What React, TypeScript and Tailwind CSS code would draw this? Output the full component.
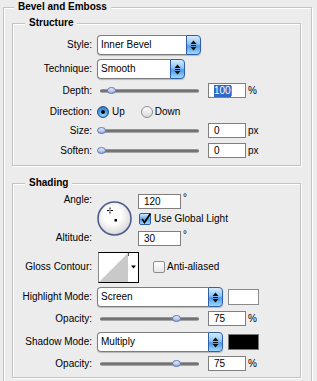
import React from "react";

type Kids = { children?: React.ReactNode };

function Group({ title, titleLeft, className = "", children }: Kids & { title: string; titleLeft: string; className?: string }) {
  return (
    <div className={`relative border border-[#c3c3c3] shadow-[inset_1px_1px_0_#fff,1px_1px_0_#fff] ${className}`}>
      <span className={`absolute -top-[8px] h-[14px] bg-[#ececec] px-[4px] text-[10px] font-bold leading-[14px] ${titleLeft}`}>{title}</span>
      {children}
    </div>
  );
}

function Row({ label, className = "", children }: Kids & { label: string; className?: string }) {
  return (
    <div className={`flex items-center ${className}`}>
      <div className="w-[79px] shrink-0 text-right">{label}</div>
      <div className="ml-[5px] flex items-center">{children}</div>
    </div>
  );
}

function Arrows() {
  return (
    <svg width="7" height="11" viewBox="0 0 7 11">
      <path d="M3.5 0.5L6.5 4H0.5z" fill="#111" />
      <rect x="1" y="5" width="5" height="1" fill="#111" />
      <path d="M0.5 7H6.5L3.5 10.5z" fill="#111" />
    </svg>
  );
}

function Select({ value, width }: { value: string; width: string }) {
  return (
    <div className={`flex h-[20px] rounded-[4px] shadow-[0_1px_1px_rgba(0,0,0,0.22)] ${width}`}>
      <div className="flex flex-1 items-center rounded-l-[4px] border border-r-0 border-[#7d7d7d] bg-white pl-[3px]">{value}</div>
      <div className="flex w-[15px] items-center justify-center rounded-r-[4px] border border-[#2f5fa8] bg-[linear-gradient(#d6ebfd,#8cc4f3_45%,#4d98e4_55%,#a0d9fd)]">
        <Arrows />
      </div>
    </div>
  );
}

function Field({ children, w = "w-[38px]" }: Kids & { w?: string }) {
  return <div className={`flex h-[15px] items-center border border-[#7f7f7f] bg-white pl-[5px] ${w}`}>{children}</div>;
}

function Slider({ value, min, max }: { value: number; min: number; max: number }) {
  const left = ((value - min) / (max - min)) * 100;
  return (
    <div className="relative h-[15px] w-[106px]">
      <div className="absolute left-[3px] right-[4px] top-[6px] h-[4px] rounded-full bg-[linear-gradient(#a9a9a9,#5e5e5e_50%,#bdbdbd)]" />
      <svg className="absolute top-[4px]" style={{ left }} width="9" height="7" viewBox="0 0 9 7">
        <defs>
          <linearGradient id="th" x1="0" y1="0" x2="0" y2="1">
            <stop offset="0" stopColor="#eef4ff" />
            <stop offset="1" stopColor="#8eaade" />
          </linearGradient>
        </defs>
        <ellipse cx="4.5" cy="3.5" rx="4" ry="3" fill="url(#th)" stroke="#5f76aa" strokeWidth="1" />
      </svg>
    </div>
  );
}

function Radio({ checked }: { checked?: boolean }) {
  return checked ? (
    <span className="flex h-[12px] w-[12px] shrink-0 items-center justify-center rounded-full border border-[#27508f] bg-[radial-gradient(circle_at_50%_70%,#a6e4ff,#3f8fe0_60%,#2062b8)]">
      <span className="h-[4px] w-[4px] rounded-full bg-black" />
    </span>
  ) : (
    <span className="block h-[12px] w-[12px] shrink-0 rounded-full border border-[#8c8c8c] bg-[linear-gradient(#fdfdfd,#d9d9d9)]" />
  );
}

function Check({ checked }: { checked?: boolean }) {
  return checked ? (
    <span className="relative block h-[12px] w-[12px] shrink-0 rounded-[2px] border border-[#2c5ea8] bg-[linear-gradient(#cde7fd,#5aa3ea_55%,#9fd6fd)]">
      <svg className="absolute -top-[2px] left-0" width="12" height="13" viewBox="0 0 12 13">
        <path d="M2 7L4.5 10.5L10.5 1.5" fill="none" stroke="#000" strokeWidth="1.8" />
      </svg>
    </span>
  ) : (
    <span className="block h-[12px] w-[12px] shrink-0 rounded-[2px] border border-[#8c8c8c] bg-[linear-gradient(#fff,#e6e6e6)]" />
  );
}

function Dial() {
  return (
    <svg width="35" height="35" viewBox="0 0 35 35">
      <defs>
        <radialGradient id="dl" cx="0.45" cy="0.4" r="0.6">
          <stop offset="0.45" stopColor="#fdfdfd" />
          <stop offset="1" stopColor="#d8d8d8" />
        </radialGradient>
      </defs>
      <circle cx="17.5" cy="17.5" r="16.5" fill="url(#dl)" stroke="#4d5c8b" strokeWidth="1.6" />
      <path d="M10 9.5H12M14 9.5H16M13 6.5V8.5M13 10.5V12.5" stroke="#000" strokeWidth="1" />
      <rect x="12.5" y="9" width="1" height="1" fill="#000" />
      <rect x="17.5" y="18" width="2.5" height="2.5" fill="#000" />
    </svg>
  );
}

function Contour() {
  return (
    <svg width="41" height="31" viewBox="0 0 41 31">
      <rect x="0.5" y="0.5" width="40" height="30" fill="#fff" stroke="#000" />
      <line x1="0.5" y1="0.5" x2="0.5" y2="30.5" stroke="#8a8a8a" />
      <path d="M1 30L30 1V30z" fill="#c9c9c9" />
      <line x1="30.5" y1="1" x2="30.5" y2="4" stroke="#555" />
      <path d="M33 13.5H38L35.5 16.5z" fill="#000" />
    </svg>
  );
}

export default function App() {
  return (
    <div className="h-[381px] w-[317px] overflow-hidden bg-[#ececec] pl-[3px] pt-[7px] font-['Liberation_Sans',Arial,sans-serif] text-[10px] leading-[12px] text-black">
      <Group title="Bevel and Emboss" titleLeft="left-[10px]" className="h-[400px] w-[309px]">
        <Group title="Structure" titleLeft="left-[12px]" className="ml-[8px] mt-[15px] w-[289px] pb-[7px]">
          <Row label="Style:" className="mt-[11px] h-[20px]">
            <Select value="Inner Bevel" width="w-[104px]" />
          </Row>
          <Row label="Technique:" className="mt-[4px] h-[20px]">
            <Select value="Smooth" width="w-[88px]" />
          </Row>
          <Row label="Depth:" className="mt-[4px] h-[15px]">
            <Slider value={100} min={1} max={1000} />
            <div className="ml-[5px]">
              <Field>
                <span className="bg-[#3168c6] text-white">100</span>
                <span className="h-[10px] w-[1px] bg-[#d07a28]" />
              </Field>
            </div>
            <span className="ml-[2px]">%</span>
          </Row>
          <Row label="Direction:" className="mt-[8px] h-[12px]">
            <Radio checked />
            <span className="ml-[3px]">Up</span>
            <span className="ml-[16px] flex">
              <Radio />
            </span>
            <span className="ml-[2px]">Down</span>
          </Row>
          <Row label="Size:" className="mt-[5px] h-[15px]">
            <Slider value={0} min={0} max={250} />
            <div className="ml-[5px]">
              <Field>0</Field>
            </div>
            <span className="ml-[2px]">px</span>
          </Row>
          <Row label="Soften:" className="mt-[5px] h-[15px]">
            <Slider value={0} min={0} max={16} />
            <div className="ml-[5px]">
              <Field>0</Field>
            </div>
            <span className="ml-[2px]">px</span>
          </Row>
        </Group>

        <Group title="Shading" titleLeft="left-[12px]" className="ml-[8px] mt-[17px] w-[289px] pb-[6px]">
          <div className="mt-[10px] flex h-[52px]">
            <div className="flex w-[79px] shrink-0 flex-col text-right">
              <div className="h-[12px]">Angle:</div>
              <div className="mt-[26px] h-[12px]">Altitude:</div>
            </div>
            <div className="ml-[5px] mt-[7px]">
              <Dial />
            </div>
            <div className="ml-[6px] flex flex-col">
              <div className="flex">
                <Field w="w-[43px]">120</Field>
                <span className="ml-[2px] leading-[8px]">°</span>
              </div>
              <div className="ml-[1px] mt-[4px] flex h-[12px] items-center">
                <Check checked />
                <span className="ml-[3px]">Use Global Light</span>
              </div>
              <div className="mt-[6px] flex">
                <Field w="w-[43px]">30</Field>
                <span className="ml-[2px] leading-[8px]">°</span>
              </div>
            </div>
          </div>
          <div className="mt-[6px] flex h-[30px] items-center">
            <div className="w-[79px] shrink-0 text-right">Gloss Contour:</div>
            <div className="ml-[6px]">
              <Contour />
            </div>
            <span className="ml-[14px] flex items-center">
              <Check />
              <span className="ml-[2px]">Anti-aliased</span>
            </span>
          </div>
          <Row label="Highlight Mode:" className="mt-[5px] h-[20px]">
            <Select value="Screen" width="w-[126px]" />
            <div className="ml-[5px] h-[16px] w-[31px] border border-[#8a8a8a] bg-white" />
          </Row>
          <Row label="Opacity:" className="mt-[4px] h-[15px]">
            <Slider value={75} min={0} max={100} />
            <div className="ml-[5px]">
              <Field>75</Field>
            </div>
            <span className="ml-[2px]">%</span>
          </Row>
          <Row label="Shadow Mode:" className="mt-[6px] h-[20px]">
            <Select value="Multiply" width="w-[126px]" />
            <div className="ml-[5px] h-[16px] w-[31px] border border-[#7a7a7a] bg-black" />
          </Row>
          <Row label="Opacity:" className="mt-[4px] h-[15px]">
            <Slider value={75} min={0} max={100} />
            <div className="ml-[5px]">
              <Field>75</Field>
            </div>
            <span className="ml-[2px]">%</span>
          </Row>
        </Group>
      </Group>
    </div>
  );
}
